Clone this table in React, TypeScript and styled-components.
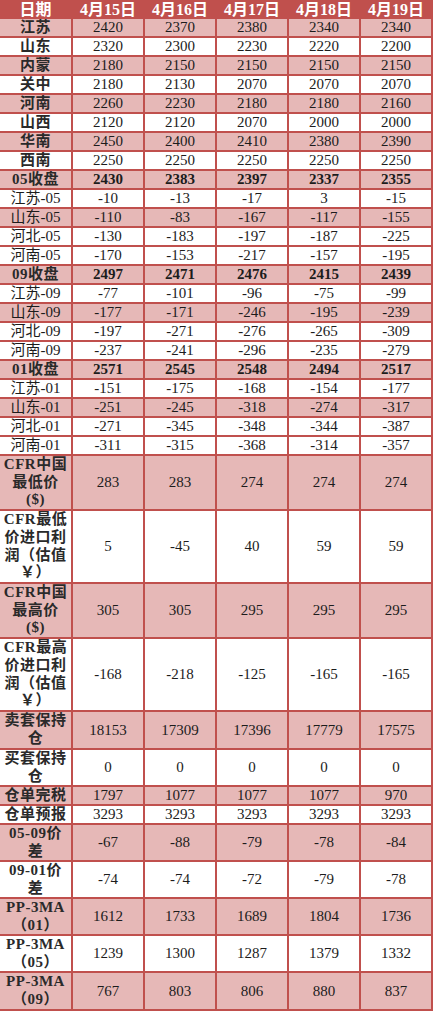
import * as React from "react"
import styled, { createGlobalStyle } from "styled-components"

const RED = "#c0504d"
const PINK = "#e6b8b7"

const GlobalStyle = createGlobalStyle`
    html, body {
        margin: 0;
        padding: 0;
        background: #ffffff;
    }
    body {
        font-family: "Liberation Serif", "Noto Sans CJK SC", serif;
        color: #1c1c1c;
    }
`

type RowData = {
    label: string[]
    values: (number | string)[]
    height: number
    shaded: boolean
    boldLabel?: boolean
    boldValues?: boolean
}

const dates = ["4月15日", "4月16日", "4月17日", "4月18日", "4月19日"]

const rows: RowData[] = [
    { label: ["江苏"], values: [2420, 2370, 2380, 2340, 2340], height: 17, shaded: true, boldLabel: true },
    { label: ["山东"], values: [2320, 2300, 2230, 2220, 2200], height: 17, shaded: false, boldLabel: true },
    { label: ["内蒙"], values: [2180, 2150, 2150, 2150, 2150], height: 17, shaded: true, boldLabel: true },
    { label: ["关中"], values: [2180, 2130, 2070, 2070, 2070], height: 17, shaded: false, boldLabel: true },
    { label: ["河南"], values: [2260, 2230, 2180, 2180, 2160], height: 17, shaded: true, boldLabel: true },
    { label: ["山西"], values: [2120, 2120, 2070, 2000, 2000], height: 17, shaded: false, boldLabel: true },
    { label: ["华南"], values: [2450, 2400, 2410, 2380, 2390], height: 17, shaded: true, boldLabel: true },
    { label: ["西南"], values: [2250, 2250, 2250, 2250, 2250], height: 17, shaded: false, boldLabel: true },
    { label: ["05收盘"], values: [2430, 2383, 2397, 2337, 2355], height: 17, shaded: true, boldLabel: true, boldValues: true },
    { label: ["江苏-05"], values: [-10, -13, -17, 3, -15], height: 17, shaded: false },
    { label: ["山东-05"], values: [-110, -83, -167, -117, -155], height: 17, shaded: true },
    { label: ["河北-05"], values: [-130, -183, -197, -187, -225], height: 17, shaded: false },
    { label: ["河南-05"], values: [-170, -153, -217, -157, -195], height: 17, shaded: false },
    { label: ["09收盘"], values: [2497, 2471, 2476, 2415, 2439], height: 17, shaded: true, boldLabel: true, boldValues: true },
    { label: ["江苏-09"], values: [-77, -101, -96, -75, -99], height: 17, shaded: false },
    { label: ["山东-09"], values: [-177, -171, -246, -195, -239], height: 17, shaded: true },
    { label: ["河北-09"], values: [-197, -271, -276, -265, -309], height: 17, shaded: false },
    { label: ["河南-09"], values: [-237, -241, -296, -235, -279], height: 17, shaded: false },
    { label: ["01收盘"], values: [2571, 2545, 2548, 2494, 2517], height: 17, shaded: true, boldLabel: true, boldValues: true },
    { label: ["江苏-01"], values: [-151, -175, -168, -154, -177], height: 17, shaded: false },
    { label: ["山东-01"], values: [-251, -245, -318, -274, -317], height: 17, shaded: true },
    { label: ["河北-01"], values: [-271, -345, -348, -344, -387], height: 17, shaded: false },
    { label: ["河南-01"], values: [-311, -315, -368, -314, -357], height: 17, shaded: false },
    { label: ["CFR中国", "最低价", "($)"], values: [283, 283, 274, 274, 274], height: 53, shaded: true, boldLabel: true },
    { label: ["CFR最低", "价进口利", "润（估值", "￥）"], values: [5, -45, 40, 59, 59], height: 71, shaded: false, boldLabel: true },
    { label: ["CFR中国", "最高价", "($)"], values: [305, 305, 295, 295, 295], height: 53, shaded: true, boldLabel: true },
    { label: ["CFR最高", "价进口利", "润（估值", "￥）"], values: [-168, -218, -125, -165, -165], height: 71, shaded: false, boldLabel: true },
    { label: ["卖套保持", "仓"], values: [18153, 17309, 17396, 17779, 17575], height: 36, shaded: true, boldLabel: true },
    { label: ["买套保持", "仓"], values: [0, 0, 0, 0, 0], height: 35, shaded: false, boldLabel: true },
    { label: ["仓单完税"], values: [1797, 1077, 1077, 1077, 970], height: 17, shaded: true, boldLabel: true },
    { label: ["仓单预报"], values: [3293, 3293, 3293, 3293, 3293], height: 17, shaded: false, boldLabel: true },
    { label: ["05-09价", "差"], values: [-67, -88, -79, -78, -84], height: 35, shaded: true, boldLabel: true },
    { label: ["09-01价", "差"], values: [-74, -74, -72, -79, -78], height: 35, shaded: false, boldLabel: true },
    { label: ["PP-3MA", "（01）"], values: [1612, 1733, 1689, 1804, 1736], height: 35, shaded: true, boldLabel: true },
    { label: ["PP-3MA", "（05）"], values: [1239, 1300, 1287, 1379, 1332], height: 35, shaded: false, boldLabel: true },
    { label: ["PP-3MA", "（09）"], values: [767, 803, 806, 880, 837], height: 36, shaded: true, boldLabel: true },
]

export default function App() {
    return (
        <>
            <GlobalStyle />
            <Sheet>
                <Row $height={17}>
                    <HeaderCell>日期</HeaderCell>
                    {dates.map(d => (
                        <HeaderCell key={d}>{d}</HeaderCell>
                    ))}
                </Row>
                {rows.map((r, i) => (
                    <Row key={i} $height={r.height}>
                        <LabelCell $shaded={r.shaded} $bold={!!r.boldLabel} $narrow={r.label.length === 1}>
                            {r.label.map((line, j) => (
                                <span key={j}>{line}</span>
                            ))}
                        </LabelCell>
                        {r.values.map((v, j) => (
                            <ValueCell key={j} $shaded={r.shaded} $bold={!!r.boldValues}>
                                {v}
                            </ValueCell>
                        ))}
                    </Row>
                ))}
            </Sheet>
        </>
    )
}

const Sheet = styled.div`
    width: 433px;
    box-sizing: border-box;
    display: flex;
    flex-direction: column;
    gap: 2px;
    padding: 0 2px 2px 0;
    background: ${RED};
`

const Row = styled.div<{ $height: number }>`
    display: grid;
    grid-template-columns: 71px repeat(5, 70px);
    column-gap: 2px;
    height: ${p => p.$height}px;
`

const Cell = styled.div`
    display: flex;
    align-items: center;
    justify-content: center;
    text-align: center;
    font-size: 15px;
    white-space: nowrap;
    overflow: hidden;
`

const HeaderCell = styled(Cell)`
    background: ${RED};
    color: #ffffff;
    font-weight: 700;
    font-size: 16px;
    line-height: 17px;
    padding-top: 1px;
`

const LabelCell = styled(Cell)<{ $shaded: boolean; $bold: boolean; $narrow: boolean }>`
    flex-direction: column;
    background: ${p => (p.$shaded ? PINK : "#ffffff")};
    font-weight: ${p => (p.$bold ? 700 : 400)};
    color: ${p => (p.$bold ? "#2a2a2a" : "#1c1c1c")};
    line-height: ${p => (p.$narrow ? "17px" : "17.7px")};
    letter-spacing: ${p => (p.$bold ? "0.5px" : "0")};
`

const ValueCell = styled(Cell)<{ $shaded: boolean; $bold: boolean }>`
    background: ${p => (p.$shaded ? PINK : "#ffffff")};
    font-weight: ${p => (p.$bold ? 700 : 400)};
    line-height: 17px;
`
